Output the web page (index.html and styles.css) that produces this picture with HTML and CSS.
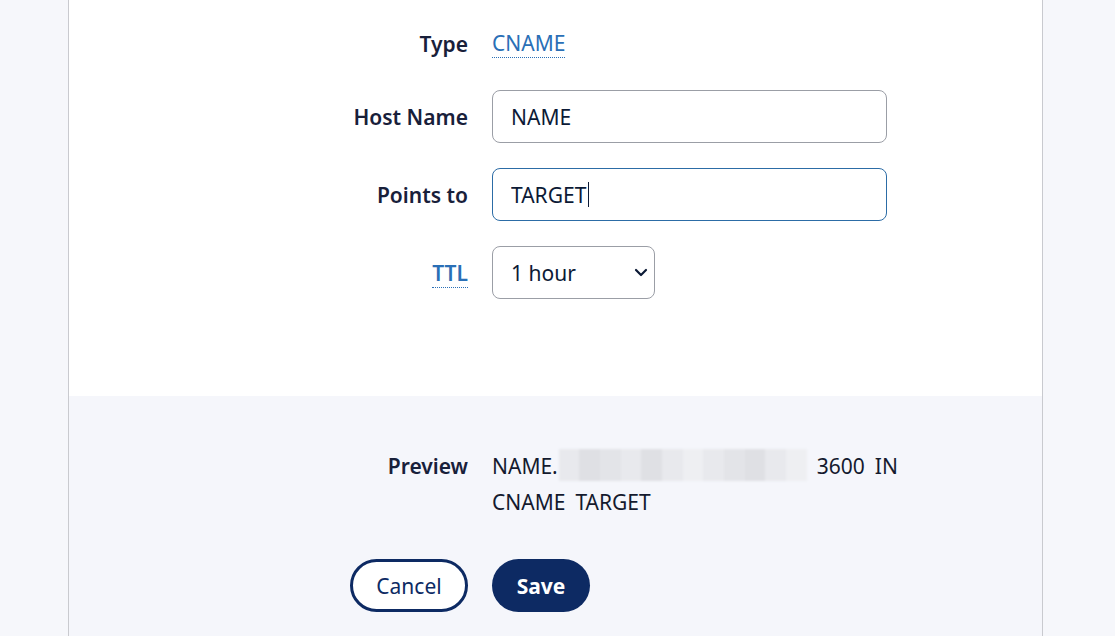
FILE: index.html
```html
<!DOCTYPE html>
<html>
<head>
    <title>Edit record</title>
    <link rel="stylesheet" href="styles.css">
</head>
<body>
    <div class="record-card">
        <form class="record-form" id="recordForm">
            <div class="form-row row-type">
                <span class="row-label">Type</span>
                <span class="info-link">CNAME</span>
            </div>
            <div class="form-row">
                <label class="row-label" for="hostName">Host Name</label>
                <input class="text-field" type="text" id="hostName" value="NAME">
            </div>
            <div class="form-row">
                <label class="row-label" for="pointsTo">Points to</label>
                <div class="field-wrap">
                    <input class="text-field is-focused" type="text" id="pointsTo" value="TARGET">
                    <span class="caret"></span>
                </div>
            </div>
            <div class="form-row">
                <label class="row-label" for="ttl"><span class="info-link strong">TTL</span></label>
                <div class="select-wrap">
                    <select class="select-field" id="ttl">
                        <option>1 hour</option>
                        <option>30 minutes</option>
                        <option>1 day</option>
                    </select>
                    <svg class="select-arrow" width="14" height="9" viewBox="0 0 14 9">
                        <path d="M2 2 L7 7 L12 2" fill="none" stroke="#0c1a36" stroke-width="2.2" stroke-linecap="round" stroke-linejoin="round"/>
                    </svg>
                </div>
            </div>
        </form>

        <div class="record-footer">
            <div class="form-row preview-row">
                <span class="row-label">Preview</span>
                <div class="preview-text">
                    NAME.<span class="masked"><i></i><i class="d1"></i><i class="d2"></i><i></i><i class="d1"></i><i></i><i class="d3"></i><i></i><i class="d2"></i><i class="d1"></i><i></i><i class="d3"></i></span><span class="gap">3600</span><span class="gap">IN</span><br>
                    CNAME<span class="gap">TARGET</span>
                </div>
            </div>
            <div class="form-row button-row">
                <button type="button" class="btn btn-outline">Cancel</button>
                <button type="submit" class="btn btn-solid">Save</button>
            </div>
        </div>
    </div>
</body>
</html>
```

FILE: styles.css
```css
/* page */
body {
    margin: 0;
    background: #f6f7fb;
    font-family: "Noto Sans", "Open Sans", sans-serif;
    font-size: 21px;
    color: #141a2e;
}

.record-card {
    width: 975px;
    margin-left: 68px;
    border-left: 1px solid #c9cacf;
    border-right: 1px solid #c9cacf;
    min-height: 636px;
    box-sizing: border-box;
    background: #f5f6fb;
}

/* rows */
.form-row {
    display: grid;
    grid-template-columns: 399px 1fr;
    column-gap: 24px;
    align-items: center;
}

.row-label {
    justify-self: end;
    font-weight: 600;
    color: #18203a;
}

.record-form {
    background: #fff;
    padding: 17px 0 97px;
    display: flex;
    flex-direction: column;
    gap: 25px;
}

.row-type {
    height: 53px;
    margin-bottom: -5px;
}

.info-link {
    justify-self: start;
    color: #2a6fb6;
    line-height: 27px;
    border-bottom: 1px dotted #2a6fb6;
}

.info-link.strong {
    font-weight: 600;
}

/* inputs */
.field-wrap {
    position: relative;
    width: 395px;
}

.caret {
    position: absolute;
    left: 96px;
    top: 14px;
    width: 1px;
    height: 25px;
    background: #0c1a36;
}

.text-field {
    width: 395px;
    height: 53px;
    box-sizing: border-box;
    padding: 0 18px;
    border: 1px solid #9b9ea6;
    border-radius: 8px;
    font-family: inherit;
    font-size: 21px;
    color: #0c1a36;
    background: #fff;
    outline: none;
}

.text-field.is-focused,
.text-field:focus {
    border-color: #2c6ca6;
}

.select-wrap {
    position: relative;
    width: 163px;
}

.select-field {
    width: 163px;
    height: 53px;
    box-sizing: border-box;
    padding: 0 18px;
    border: 1px solid #9b9ea6;
    border-radius: 8px;
    font-family: inherit;
    font-size: 21px;
    color: #0c1a36;
    background: #fff;
    appearance: none;
    -webkit-appearance: none;
    outline: none;
}

.select-arrow {
    position: absolute;
    right: 7px;
    top: 22px;
    pointer-events: none;
}

/* footer */
.record-footer {
    padding: 52px 0 24px;
}

.preview-row {
    align-items: start;
}

.preview-row .row-label {
    line-height: 36px;
}

.preview-text {
    line-height: 36px;
    color: #141a2e;
}

.gap {
    margin-left: 10px;
}

.masked {
    display: inline-flex;
    width: 248px;
    height: 32px;
    margin-left: 1px;
    vertical-align: -7px;
    background: #e9eaee;
    filter: blur(1.2px);
}

.masked i {
    flex: 1;
    background: #e8e9ed;
}

.masked i.d1 { background: #dfe0e4; }
.masked i.d2 { background: #e3e4e8; }
.masked i.d3 { background: #eeeff2; }

.button-row {
    margin-top: 39px;
}

.btn {
    height: 53px;
    border-radius: 27px;
    font-family: inherit;
    font-size: 21px;
    cursor: pointer;
    box-sizing: border-box;
}

.btn-outline {
    justify-self: end;
    width: 118px;
    background: #fff;
    color: #0d2a63;
    border: 3px solid #0d2a63;
}

.btn-solid {
    justify-self: start;
    width: 98px;
    background: #0d2a63;
    color: #fff;
    border: none;
    font-weight: 700;
}
```
